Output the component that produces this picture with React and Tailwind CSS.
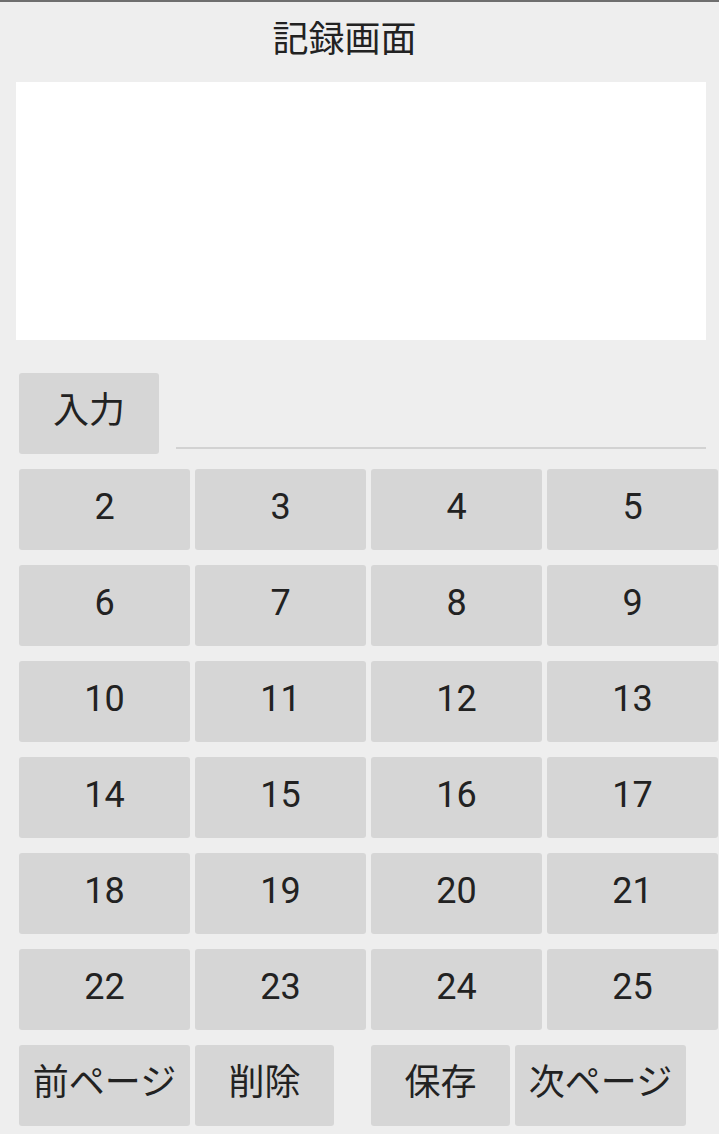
const font = { fontFamily: 'Roboto, "Noto Sans CJK JP", sans-serif' };

const rows = [
  ['2', '3', '4', '5'],
  ['6', '7', '8', '9'],
  ['10', '11', '12', '13'],
  ['14', '15', '16', '17'],
  ['18', '19', '20', '21'],
  ['22', '23', '24', '25'],
];

function Key({ label, className = 'w-[171px]' }) {
  return (
    <button
      type="button"
      className={`${className} h-[81px] shrink-0 rounded-[3px] bg-[#d6d6d6] text-[36px] leading-none text-[#222222] flex items-center justify-center whitespace-nowrap pb-[5px]`}
    >
      {label}
    </button>
  );
}

export default function App() {
  return (
    <div
      className="w-[719px] h-[1134px] overflow-hidden bg-[#eeeeee] border-t-2 border-[#6e6e6e]"
      style={font}
    >
      <div className="h-[80px] flex items-center justify-center pr-[30px] pb-[4px]">
        <h1 className="text-[36px] leading-none text-[#222222] font-normal">記録画面</h1>
      </div>

      <div className="ml-[16px] w-[690px] h-[258px] bg-white" />

      <div className="mt-[33px] flex items-end">
        <Key label="入力" className="ml-[19px] w-[140px]" />
        <div className="ml-[17px] mb-[5px] w-[530px] h-[2px] bg-[#d2d2d2]" />
      </div>

      <div className="mt-[15px] ml-[19px] flex flex-col gap-[15px]">
        {rows.map((row, i) => (
          <div key={i} className="flex gap-[5px]">
            {row.map((n) => (
              <Key key={n} label={n} />
            ))}
          </div>
        ))}

        <div className="flex">
          <Key label="前ページ" />
          <Key label="削除" className="ml-[5px] w-[139px]" />
          <Key label="保存" className="ml-[37px] w-[139px]" />
          <Key label="次ページ" className="ml-[5px] w-[171px]" />
        </div>
      </div>
    </div>
  );
}
